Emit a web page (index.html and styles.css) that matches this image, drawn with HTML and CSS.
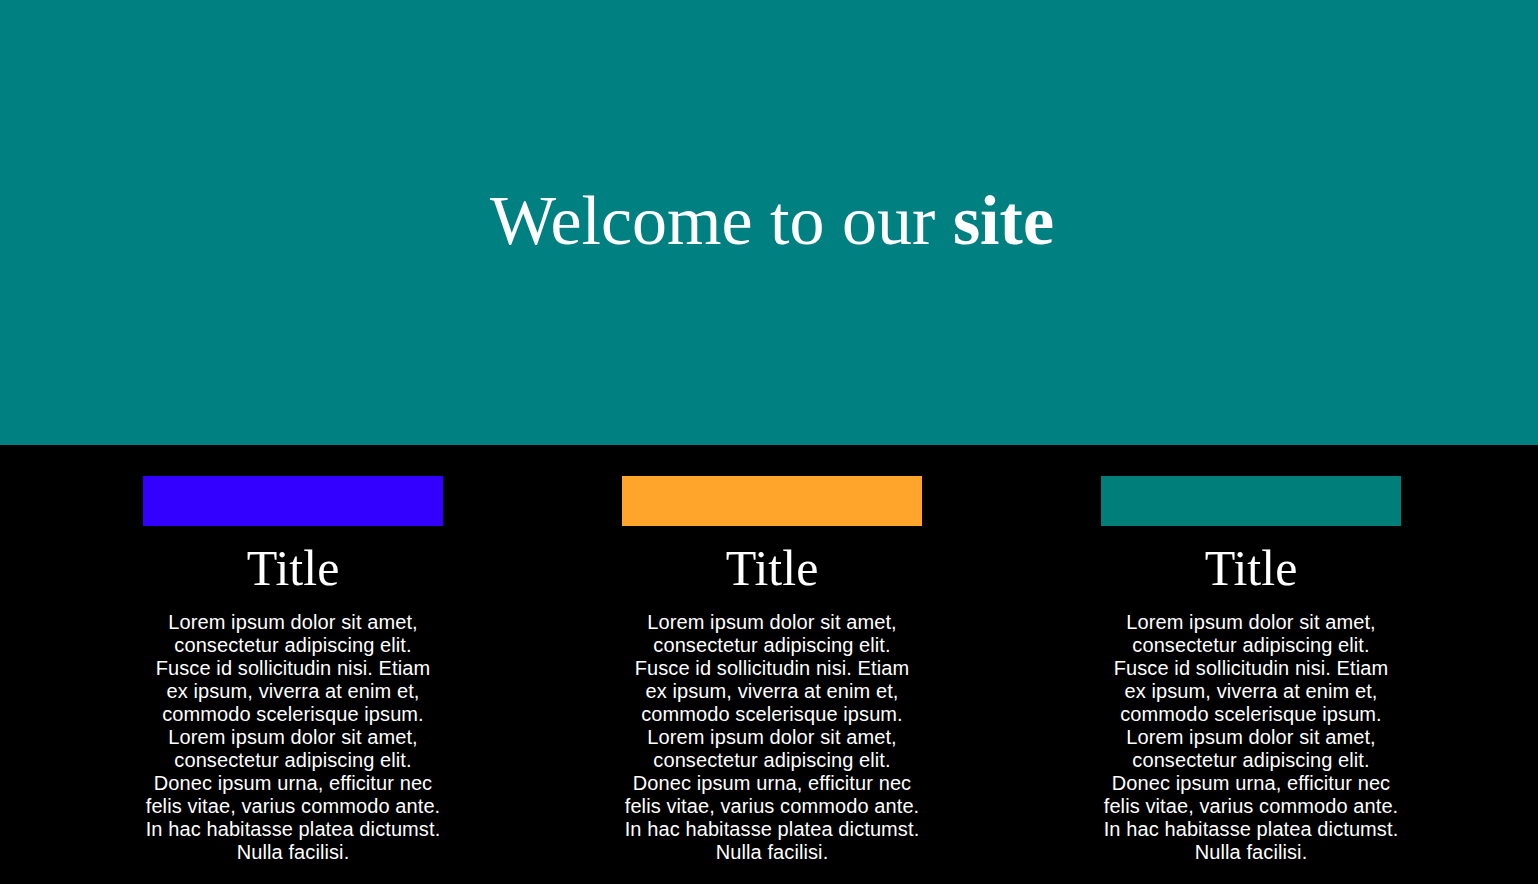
FILE: index.html
```html
<!DOCTYPE html>
<html>
<head>
<meta charset="utf-8">
<link rel="stylesheet" href="styles.css">
</head>
<body>
<header class="hero">
  <h1 class="hero-title">Welcome to our <strong>site</strong></h1>
</header>
<main class="features">
  <section class="card">
    <div class="swatch swatch-blue"></div>
    <h2 class="card-title">Title</h2>
    <p class="card-text">Lorem ipsum dolor sit amet,<br>consectetur adipiscing elit.<br>Fusce id sollicitudin nisi. Etiam<br>ex ipsum, viverra at enim et,<br>commodo scelerisque ipsum.<br>Lorem ipsum dolor sit amet,<br>consectetur adipiscing elit.<br>Donec ipsum urna, efficitur nec<br>felis vitae, varius commodo ante.<br>In hac habitasse platea dictumst.<br>Nulla facilisi.</p>
  </section>
  <section class="card">
    <div class="swatch swatch-orange"></div>
    <h2 class="card-title">Title</h2>
    <p class="card-text">Lorem ipsum dolor sit amet,<br>consectetur adipiscing elit.<br>Fusce id sollicitudin nisi. Etiam<br>ex ipsum, viverra at enim et,<br>commodo scelerisque ipsum.<br>Lorem ipsum dolor sit amet,<br>consectetur adipiscing elit.<br>Donec ipsum urna, efficitur nec<br>felis vitae, varius commodo ante.<br>In hac habitasse platea dictumst.<br>Nulla facilisi.</p>
  </section>
  <section class="card">
    <div class="swatch swatch-teal"></div>
    <h2 class="card-title">Title</h2>
    <p class="card-text">Lorem ipsum dolor sit amet,<br>consectetur adipiscing elit.<br>Fusce id sollicitudin nisi. Etiam<br>ex ipsum, viverra at enim et,<br>commodo scelerisque ipsum.<br>Lorem ipsum dolor sit amet,<br>consectetur adipiscing elit.<br>Donec ipsum urna, efficitur nec<br>felis vitae, varius commodo ante.<br>In hac habitasse platea dictumst.<br>Nulla facilisi.</p>
  </section>
</main>
</body>
</html>
```
FILE: styles.css
```css
html, body {
  margin: 0;
  padding: 0;
  background: #000;
  color: #fff;
}
body {
  height: 884px;
  overflow: hidden;
}
.hero {
  height: 445px;
  background: #008080;
  display: flex;
  align-items: center;
  justify-content: center;
}
.hero-title {
  margin: 0 0 4px;
  font-family: "Liberation Serif", "Times New Roman", serif;
  font-weight: normal;
  font-size: 70px;
  line-height: 1;
  padding-left: 6px;
}
.hero-title strong {
  font-weight: bold;
}
.features {
  display: flex;
  gap: 179px;
  padding: 31px 0 0 143px;
}
.card {
  width: 300px;
  display: flex;
  flex-direction: column;
  align-items: center;
  text-align: center;
}
.swatch {
  width: 300px;
  height: 50px;
}
.swatch-blue { background: #3300ff; }
.swatch-orange { background: #ffa52b; }
.swatch-teal { background: #007f7a; }
.card-title {
  margin: 15px 0 0;
  font-family: "Liberation Serif", "Times New Roman", serif;
  font-weight: normal;
  font-size: 50px;
  line-height: 55px;
}
.card-text {
  margin: 15px 0 0;
  width: 300px;
  font-family: "Liberation Sans", Arial, Helvetica, sans-serif;
  font-size: 20px;
  line-height: 23px;
  letter-spacing: 0.1px;
  white-space: nowrap;
}
```
